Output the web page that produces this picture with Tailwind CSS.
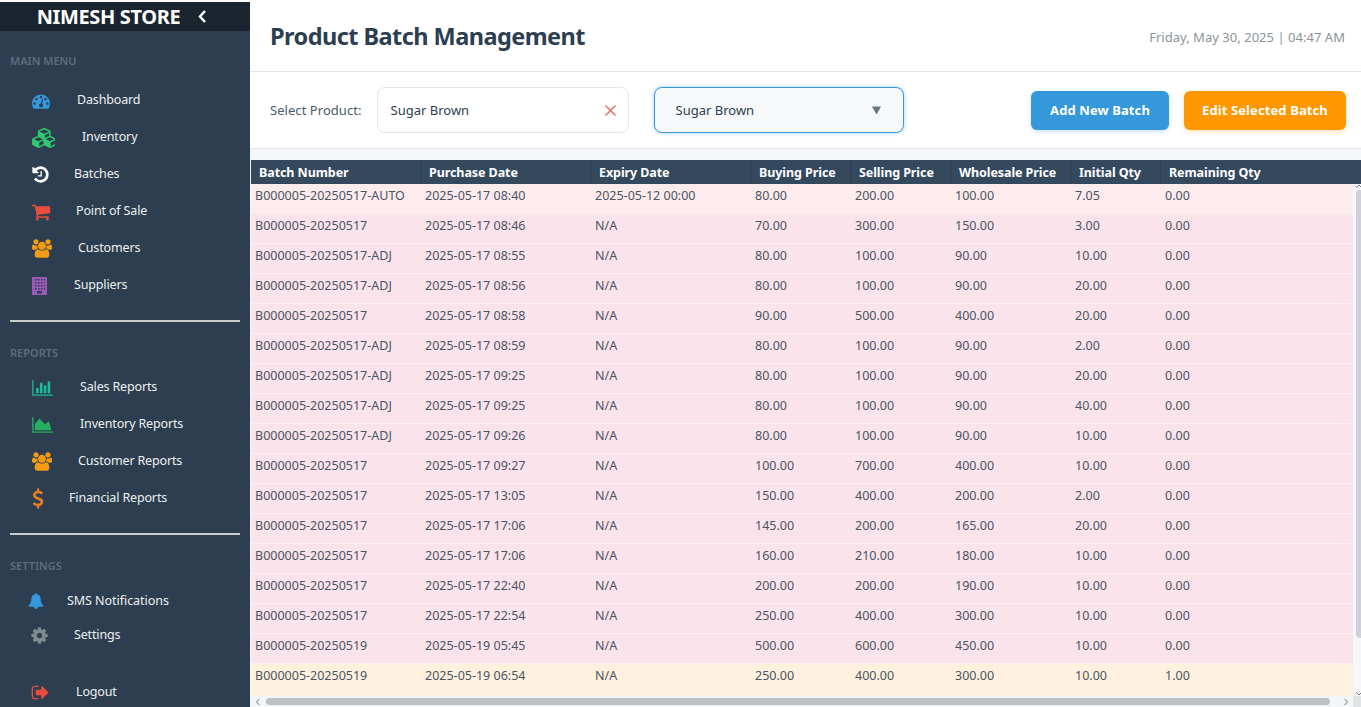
<!DOCTYPE html>
<html lang="en">

<head>
    <meta charset="UTF-8">
    <title>Product Batch Management</title>
    <script src="https://cdn.jsdelivr.net/npm/@tailwindcss/browser@4"></script>
</head>

<body class="h-screen overflow-hidden bg-white font-['Noto_Sans',sans-serif] text-[#2c3e50]">
    <div class="flex h-[707px]">
        <!-- Sidebar -->
        <aside class="w-[250px] shrink-0 bg-[#2c3e50] text-[12.5px] tracking-[-0.15px] text-[#ecf0f1] flex flex-col pt-[2px] bg-clip-content overflow-hidden">
            <div class="h-[29px] shrink-0 bg-[#1a252f] flex items-center justify-center pr-[6px] gap-[17px]">
                <span class="text-white text-[20px] leading-none font-bold tracking-[-0.35px]">NIMESH STORE</span>
                <svg class="w-[10px] h-[13px]" viewBox="0 0 10 13"><path d="M8 1 3 6.500 8 12" fill="none" stroke="#fff" stroke-width="2.500"/></svg>
            </div>

            <div class="mt-[23px] shrink-0 pl-[10px] h-[14px] leading-[14px] text-[11px] tracking-normal font-semibold text-[#5d6d7e]">MAIN MENU</div>
            <nav class="mt-[14px] shrink-0 flex flex-col">
                <a class="h-[37px] flex items-center pl-[32px]"><svg class="w-[18px] h-[18px] fill-[#3498db]" viewBox="0 0 1792 1792"><path d="M384 1152q0-53-37.500-90.500t-90.500-37.500-90.500 37.500-37.500 90.500 37.500 90.500 90.500 37.500 90.500-37.500 37.500-90.500zm192-448q0-53-37.500-90.500t-90.500-37.500-90.500 37.500-37.500 90.500 37.500 90.500 90.500 37.500 90.500-37.500 37.500-90.500zm428 481l101-382q6-26-7.500-48.500t-38.500-29.500-48 6.500-30 39.500l-101 382q-60 5-107 43.500t-63 98.500q-20 77 20 146t117 89 146-20 89-117q16-60-6-117t-72-91zm660-33q0-53-37.500-90.500t-90.500-37.500-90.500 37.500-37.500 90.500 37.500 90.500 90.500 37.500 90.500-37.500 37.500-90.500zm-640-640q0-53-37.500-90.500t-90.500-37.500-90.500 37.500-37.500 90.500 37.500 90.500 90.500 37.500 90.500-37.500 37.500-90.500zm448 192q0-53-37.500-90.500t-90.500-37.500-90.500 37.500-37.500 90.500 37.500 90.500 90.500 37.500 90.500-37.500 37.500-90.500zm320 448q0 261-141 483-19 29-54 29h-1402q-35 0-54-29-141-221-141-483 0-182 71-348t191-286 286-191 348-71 348 71 286 191 191 286 71 348z"/></svg><span class="ml-[27px]">Dashboard</span></a>
                <a class="h-[37px] flex items-center pl-[32px]"><svg class="w-[23px] h-[20px] fill-[#2ecc71]" viewBox="0 0 2048 1792"><path d="M640 1632l384-192v-314l-384 164v342zm-64-454l404-173-404-173-404 173zm1088 454l384-192v-314l-384 164v342zm-64-454l404-173-404-173-404 173zm-448-293l384-165v-266l-384 164v267zm-64-379l441-189-441-189-441 189zm1088 518v416q0 36-19 67t-52 47l-448 224q-25 14-57 14t-57-14l-448-224q-4-2-7-4-2 2-7 4l-448 224q-25 14-57 14t-57-14l-448-224q-33-16-52-47t-19-67v-416q0-38 21.500-70t56.500-48l434-186v-400q0-38 21.500-70t56.500-48l448-192q23-10 50-10t50 10l448 192q35 16 56.500 48t21.500 70v400l434 186q36 16 57 48t21 70z"/></svg><span class="ml-[27px]">Inventory</span></a>
                <a class="h-[37px] flex items-center pl-[31px]"><svg class="w-[19px] h-[19px] fill-white" viewBox="0 0 1792 1792"><path d="M1664 896q0 156-61 298t-164 245-245 164-298 61q-172 0-327-72.500t-264-204.500q-7-10-6.500-22.500t8.500-20.500l137-138q10-9 25-9 16 2 23 12 73 95 179 147t225 52q104 0 198.500-40.500t163.500-109.500 109.500-163.500 40.500-198.500-40.500-198.500-109.500-163.500-163.500-109.500-198.500-40.500q-98 0-188 35.500t-160 101.500l137 138q31 30 14 69-17 40-59 40h-448q-26 0-45-19t-19-45v-448q0-42 40-59 39-17 69 14l130 129q107-101 244.500-156.500t284.500-55.500q156 0 298 61t245 164 164 245 61 298zm-640-288v448q0 14-9 23t-23 9h-320q-14 0-23-9t-9-23v-64q0-14 9-23t23-9h224v-352q0-14 9-23t23-9h64q14 0 23 9t9 23z"/></svg><span class="ml-[24px]">Batches</span></a>
                <a class="h-[37px] flex items-center pl-[31px]"><svg class="w-[20px] h-[20px] fill-[#e74c3c]" viewBox="0 0 1792 1792"><path d="M704 1536q0 52-38 90t-90 38-90-38-38-90 38-90 90-38 90 38 38 90zm896 0q0 52-38 90t-90 38-90-38-38-90 38-90 90-38 90 38 38 90zm128-1088v512q0 24-16.500 42.500t-40.500 21.500l-1044 122q13 60 13 70 0 16-24 64h920q26 0 45 19t19 45-19 45-45 19h-1024q-26 0-45-19t-19-45q0-11 8-31.500t16-36 21.500-40 15.500-29.500l-177-823h-204q-26 0-45-19t-19-45 19-45 45-19h256q16 0 28.500 6.500t19.500 15.500 13 24.500 8 26 5.500 29.500 4.500 26h1201q26 0 45 19t19 45z"/></svg><span class="ml-[25px]">Point of Sale</span></a>
                <a class="h-[37px] flex items-center pl-[32px]"><svg class="w-[20px] h-[19px] fill-[#f39c12]" viewBox="0 0 1920 1792"><path d="M593 896q-162 5-265 128h-134q-82 0-138-40.500t-56-118.500q0-353 124-353 6 0 43.500 21t97.500 42.500 119 21.500q67 0 133-23-5 37-5 66 0 139 81 256zm1071 637q0 120-73 189.500t-194 69.500h-874q-121 0-194-69.500t-73-189.500q0-53 3.500-103.500t14-109 26.500-108.500 43-97.500 62-81 85.500-53.500 111.500-20q10 0 43 21.500t73 48 107 48 135 21.500 135-21.500 107-48 73-48 43-21.500q61 0 111.500 20t85.500 53.500 62 81 43 97.500 26.500 108.500 14 109 3.500 103.500zm-1024-1277q0 106-75 181t-181 75-181-75-75-181 75-181 181-75 181 75 75 181zm704 384q0 159-112.500 271.500t-271.500 112.500-271.500-112.500-112.500-271.500 112.500-271.500 271.500-112.500 271.500 112.500 112.500 271.500zm576 225q0 78-56 118.500t-138 40.500h-134q-103-123-265-128 81-117 81-256 0-29-5-66 66 23 133 23 59 0 119-21.500t97.500-42.500 43.500-21q124 0 124 353zm-128-609q0 106-75 181t-181 75-181-75-75-181 75-181 181-75 181 75 75 181z"/></svg><span class="ml-[26px]">Customers</span></a>
                <a class="h-[37px] flex items-center pl-[32px]"><svg class="w-[15px] h-[18px] fill-[#9b59b6]" viewBox="0 0 15 18"><path fill-rule="evenodd" d="M0 0h15v18H0zM3 2v1.500h1.500V2zm3 0v1.500h1.500V2zm3 0v1.500h1.500V2zm3 0v1.500h1V2zM3 5v1.500h1.500V5zm3 0v1.500h1.500V5zm3 0v1.500h1.500V5zm3 0v1.500h1V5zM3 8v1.500h1.500V8zm3 0v1.500h1.500V8zm3 0v1.500h1.500V8zm3 0v1.500h1V8zM3 11v1.500h1.500V11zm3 0v1.500h1.500V11zm3 0v1.500h1.500V11zm3 0v1.500h1V11zM5 14v2.500h5V14z"/></svg><span class="ml-[27px]">Suppliers</span></a>
            </nav>
            <div class="mt-[16px] shrink-0 mx-[10px] h-[2px] bg-[#c8cccf]"></div>

            <div class="mt-[24px] shrink-0 pl-[10px] h-[14px] leading-[14px] text-[11px] tracking-normal font-semibold text-[#5d6d7e]">REPORTS</div>
            <nav class="mt-[9px] shrink-0 flex flex-col">
                <a class="h-[37px] flex items-center pl-[32px]"><svg class="w-[21px] h-[18px] fill-[#1abc9c]" viewBox="0 0 2048 1792"><path d="M640 896v512h-256v-512h256zm384-512v1024h-256v-1024h256zm1024 1152v128h-2048v-1536h128v1408h1920zm-640-896v768h-256v-768h256zm384-384v1152h-256v-1152h256z"/></svg><span class="ml-[27px]">Sales Reports</span></a>
                <a class="h-[37px] flex items-center pl-[32px]"><svg class="w-[21px] h-[18px] fill-[#27ae60]" viewBox="0 0 2048 1792"><path d="M2048 1536v128h-2048v-1536h128v1408h1920zm-384-1024l256 896h-1664v-576l448-576 576 576z"/></svg><span class="ml-[27px]">Inventory Reports</span></a>
                <a class="h-[37px] flex items-center pl-[32px]"><svg class="w-[20px] h-[19px] fill-[#f39c12]" viewBox="0 0 1920 1792"><path d="M593 896q-162 5-265 128h-134q-82 0-138-40.500t-56-118.500q0-353 124-353 6 0 43.500 21t97.500 42.500 119 21.500q67 0 133-23-5 37-5 66 0 139 81 256zm1071 637q0 120-73 189.500t-194 69.500h-874q-121 0-194-69.500t-73-189.500q0-53 3.500-103.500t14-109 26.500-108.500 43-97.500 62-81 85.500-53.500 111.500-20q10 0 43 21.500t73 48 107 48 135 21.500 135-21.500 107-48 73-48 43-21.500q61 0 111.500 20t85.500 53.500 62 81 43 97.500 26.500 108.500 14 109 3.500 103.500zm-1024-1277q0 106-75 181t-181 75-181-75-75-181 75-181 181-75 181 75 75 181zm704 384q0 159-112.500 271.500t-271.500 112.500-271.500-112.500-112.500-271.500 112.500-271.500 271.500-112.500 271.500 112.500 112.500 271.500zm576 225q0 78-56 118.500t-138 40.500h-134q-103-123-265-128 81-117 81-256 0-29-5-66 66 23 133 23 59 0 119-21.500t97.500-42.500 43.500-21q124 0 124 353zm-128-609q0 106-75 181t-181 75-181-75-75-181 75-181 181-75 181 75 75 181z"/></svg><span class="ml-[26px]">Customer Reports</span></a>
                <a class="h-[37px] flex items-center pl-[28px]"><svg class="w-[20px] h-[21px] fill-[#e67e22]" viewBox="0 0 1792 1792"><path d="M1362 1185q0 153-99.500 263.500t-258.500 136.500v175q0 14-9 23t-23 9h-135q-13 0-22.500-9.500t-9.500-22.500v-175q-66-9-127.500-31t-101.500-44.500-74-48-46.500-37.500-17.500-18q-17-21-2-41l103-135q7-10 23-12 15-2 24 9l2 2q113 99 243 125 37 8 74 8 81 0 142.500-43t61.500-122q0-28-15-53t-33.500-42-58.500-37.500-66-32-80-32.500q-39-16-61.500-25t-61.500-26.500-62.500-31-56.500-35.500-53.500-42.500-43.500-49-35.500-58-21-66.500-8.500-78q0-138 98-242t255-134v-180q0-13 9.500-22.500t22.500-9.500h135q14 0 23 9t9 23v176q57 6 110.500 23t87 33.500 63.500 37.500 39 29 15 14q17 18 5 38l-81 146q-8 15-23 16-14 3-27-7-3-3-14.500-12t-39-26.500-58.500-32-74.500-26-85.500-11.500q-95 0-155 43t-60 111q0 26 8.500 48t29.500 41.500 39.500 33 56 31 60.500 27 70 27.500q53 20 81 31.500t76 35 75.500 42.500 62 50 53 63.500 31.500 76.500 13 94z"/></svg><span class="ml-[21px]">Financial Reports</span></a>
            </nav>
            <div class="mt-[16px] shrink-0 mx-[10px] h-[2px] bg-[#c8cccf]"></div>

            <div class="mt-[24px] shrink-0 pl-[10px] h-[14px] leading-[14px] text-[11px] tracking-normal font-semibold text-[#5d6d7e]">SETTINGS</div>
            <nav class="mt-[11px] shrink-0 flex flex-col">
                <a class="h-[34px] flex items-center pl-[28px]"><svg class="w-[16px] h-[16px] fill-[#3498db]" viewBox="0 0 1792 1792"><path d="M912 1696q0-16-16-16-59 0-101.500-42.500t-42.500-101.500q0-16-16-16t-16 16q0 73 51.500 124.500t124.500 51.500q16 0 16-16zm816-288q0 52-38 90t-90 38h-448q0 106-75 181t-181 75-181-75-75-181h-448q-52 0-90-38t-38-90q50-42 91-88t85-119.500 74.500-158.500 50-206 19.500-260q0-152 117-282.500t307-158.500q-8-19-8-39 0-40 28-68t68-28 68 28 28 68q0 20-8 39 190 28 307 158.500t117 282.500q0 139 19.500 260t50 206 74.500 158.500 85 119.500 91 88z"/></svg><span class="ml-[23px] tracking-[-0.05px]">SMS Notifications</span></a>
                <a class="h-[34px] flex items-center pl-[30px]"><svg class="w-[19px] h-[19px] fill-[#7f8c8d]" viewBox="0 0 1792 1792"><path d="M1152 896q0-106-75-181t-181-75-181 75-75 181 75 181 181 75 181-75 75-181zm512-109v222q0 12-8 23t-20 13l-185 28q-19 54-39 91 35 50 107 138 10 12 10 25t-9 23q-27 37-99 108t-94 71q-12 0-26-9l-138-108q-44 23-91 38-16 136-29 186-7 28-36 28h-222q-14 0-24.500-8.500t-11.500-21.500l-28-184q-49-16-90-37l-141 107q-10 9-25 9-14 0-25-11-126-114-165-168-7-10-7-23 0-12 8-23 15-21 51-66.500t54-70.500q-27-50-41-99l-183-27q-13-2-21-12.500t-8-23.500v-222q0-12 8-23t19-13l186-28q14-46 39-92-40-57-107-138-10-12-10-24 0-10 9-23 26-36 98.500-107.500t94.500-71.500q13 0 26 10l138 107q44-23 91-38 16-136 29-186 7-28 36-28h222q14 0 24.500 8.500t11.500 21.500l28 184q49 16 90 37l142-107q9-9 24-9 13 0 25 10 129 119 165 170 7 8 7 22 0 12-8 23-15 21-51 66.500t-54 70.500q26 50 41 98l183 28q13 2 21 12.500t8 23.500z"/></svg><span class="ml-[25px]">Settings</span></a>
            </nav>
            <a class="mt-[23px] shrink-0 h-[34px] flex items-center pl-[31px]"><svg class="w-[19px] h-[19px] fill-[#e74c3c]" viewBox="0 0 1792 1792"><path d="M704 1440q0 4 1 20t.5 26.500-3 23.500-10 19.500-20.500 6.500h-320q-119 0-203.500-84.500t-84.500-203.500v-704q0-119 84.500-203.500t203.500-84.500h320q13 0 22.500 9.500t9.500 22.500q0 4 1 20t.5 26.500-3 23.500-10 19.500-20.500 6.500h-320q-66 0-113 47t-47 113v704q0 66 47 113t113 47h312l11.500 1 11.500 3 8 5.500 7 9 2 13.500zm928-544q0 26-19 45l-544 544q-19 19-45 19t-45-19-19-45v-288h-448q-26 0-45-19t-19-45v-384q0-26 19-45t45-19h448v-288q0-26 19-45t45-19 45 19l544 544q19 19 19 45z"/></svg><span class="ml-[26px]">Logout</span></a>
        </aside>

        <!-- Main Content -->
        <main class="flex-1 min-w-0 flex flex-col bg-[#f4f6f9]">
            <header class="h-[72px] shrink-0 bg-white border-b border-[#e3e5e8] flex items-center justify-between pl-[20px] pr-[16px]">
                <h1 class="pt-[3px] text-[23.5px] font-bold tracking-[-0.55px] text-[#2c3e50]">Product Batch Management</h1>
                <span class="pt-[4px] text-[13px] tracking-[0.03px] text-[#8a9499]">Friday, May 30, 2025 | 04:47 AM</span>
            </header>

            <div class="h-[77px] shrink-0 bg-white border-b border-[#e3e5e8] flex items-center pl-[20px] pr-[15px] text-[13px]">
                <label class="pt-[2px] text-[#4a5a6a] mr-[15px] tracking-[0.05px]">Select Product:</label>
                <div class="w-[252px] h-[46px] rounded-[8px] border border-[#e3e5e8] bg-white flex items-center justify-between pl-[13px] pr-[11px]">
                    <span class="pt-[2px]">Sugar Brown</span>
                    <svg class="w-[13px] h-[13px] opacity-80" viewBox="0 0 13 13"><path d="M1.500 1.500l10 10m0-10-10 10" stroke="#e74c3c" stroke-width="1.500" fill="none"/></svg>
                </div>
                <div class="ml-[25px] w-[250px] h-[46px] rounded-[8px] border border-[#3498db] shadow-[0_0_4px_rgba(52,152,219,0.45)] bg-[#f7f8fa] flex items-center justify-between pl-[21px] pr-[22px]">
                    <span class="pt-[2px]">Sugar Brown</span>
                    <svg class="w-[9px] h-[9px] fill-[#6b7680]" viewBox="0 0 10 9"><path d="M0 0h10L5 9z"/></svg>
                </div>
                <button class="ml-auto w-[138px] h-[39px] pt-[2px] rounded-[6px] bg-[#3498db] shadow-[0_2px_4px_rgba(52,152,219,0.25)] text-white font-bold text-[13px] tracking-[0.1px]">Add New Batch</button>
                <button class="ml-[15px] w-[162px] h-[39px] pt-[2px] rounded-[6px] bg-[#ff9800] shadow-[0_2px_4px_rgba(255,152,0,0.25)] text-white font-bold text-[13px] tracking-[0.1px]">Edit Selected Batch</button>
            </div>

            <!-- Table -->
            <section class="mt-[11px] flex-1 min-h-0 ml-[1px] overflow-hidden">
                <table class="w-full table-fixed border-separate border-spacing-0 text-[12.5px] text-[#4a5563]">
                    <thead>
                        <tr class="h-[24px] bg-[#34495e] text-white text-left">
                            <th class="w-[170px] pl-[8px] pt-[2px] text-[12.5px] tracking-[-0.08px] font-bold border-r border-[#2c3e50]">Batch Number</th>
                            <th class="w-[170px] pl-[8px] pt-[2px] text-[12.5px] tracking-[-0.08px] font-bold border-r border-[#2c3e50]">Purchase Date</th>
                            <th class="w-[160px] pl-[8px] pt-[2px] text-[12.5px] tracking-[-0.08px] font-bold border-r border-[#2c3e50]">Expiry Date</th>
                            <th class="w-[100px] pl-[8px] pt-[2px] text-[12.5px] tracking-[-0.08px] font-bold border-r border-[#2c3e50]">Buying Price</th>
                            <th class="w-[100px] pl-[8px] pt-[2px] text-[12.5px] tracking-[-0.08px] font-bold border-r border-[#2c3e50]">Selling Price</th>
                            <th class="w-[120px] pl-[8px] pt-[2px] text-[12.5px] tracking-[-0.08px] font-bold border-r border-[#2c3e50]">Wholesale Price</th>
                            <th class="w-[90px] pl-[8px] pt-[2px] text-[12.5px] tracking-[-0.08px] font-bold border-r border-[#2c3e50]">Initial Qty</th>
                            <th class="pl-[8px] pt-[2px] text-[12.5px] tracking-[-0.08px] font-bold">Remaining Qty</th>
                        </tr>
                    </thead>
                    <tbody id="batch-rows"></tbody>
                </table>
            </section>
        </main>
    </div>

    <!-- Scrollbars -->
    <div class="fixed left-[1353px] top-[184px] w-[8px] h-[512px] bg-[#f6f7f9] overflow-hidden">
        <svg class="absolute left-[3px] top-[0px] w-[8px] h-[5px]" viewBox="0 0 8 5"><path d="M0 4l3-3 3 3" fill="none" stroke="#777"/></svg>
        <div class="ml-[3px] mt-[6px] h-[448px] w-[8px] rounded-[4px] bg-[#ced2d8]"></div>
        <svg class="absolute left-[3px] bottom-[0px] w-[8px] h-[5px]" viewBox="0 0 8 5"><path d="M0 1l3 3 3-3" fill="none" stroke="#777"/></svg>
    </div>
    <div class="fixed left-[251px] top-[696px] w-[1110px] h-[11px] bg-[#f4f5f6] flex items-center">
        <svg class="w-[8px] h-[8px] ml-[3px]" viewBox="0 0 8 8"><path d="M5.500 1 2.500 4l3 3" fill="none" stroke="#777"/></svg>
        <div class="ml-[4px] w-[1064px] h-[7px] rounded-full bg-[#bcc1c5]"></div>
        <svg class="w-[8px] h-[8px] ml-[12px]" viewBox="0 0 8 8"><path d="M2.500 1l3 3-3 3" fill="none" stroke="#777"/></svg>
        <div class="ml-auto h-[11px] w-[8px] bg-[#e2e3e5]"></div>
    </div>

    <script>
        const batches = [
            ['B000005-20250517-AUTO', '08:40', '2025-05-12 00:00', '80.00', '200.00', '100.00', '7.05', '0.00'],
            ['B000005-20250517', '08:46', 'N/A', '70.00', '300.00', '150.00', '3.00', '0.00'],
            ['B000005-20250517-ADJ', '08:55', 'N/A', '80.00', '100.00', '90.00', '10.00', '0.00'],
            ['B000005-20250517-ADJ', '08:56', 'N/A', '80.00', '100.00', '90.00', '20.00', '0.00'],
            ['B000005-20250517', '08:58', 'N/A', '90.00', '500.00', '400.00', '20.00', '0.00'],
            ['B000005-20250517-ADJ', '08:59', 'N/A', '80.00', '100.00', '90.00', '2.00', '0.00'],
            ['B000005-20250517-ADJ', '09:25', 'N/A', '80.00', '100.00', '90.00', '20.00', '0.00'],
            ['B000005-20250517-ADJ', '09:25', 'N/A', '80.00', '100.00', '90.00', '40.00', '0.00'],
            ['B000005-20250517-ADJ', '09:26', 'N/A', '80.00', '100.00', '90.00', '10.00', '0.00'],
            ['B000005-20250517', '09:27', 'N/A', '100.00', '700.00', '400.00', '10.00', '0.00'],
            ['B000005-20250517', '13:05', 'N/A', '150.00', '400.00', '200.00', '2.00', '0.00'],
            ['B000005-20250517', '17:06', 'N/A', '145.00', '200.00', '165.00', '20.00', '0.00'],
            ['B000005-20250517', '17:06', 'N/A', '160.00', '210.00', '180.00', '10.00', '0.00'],
            ['B000005-20250517', '22:40', 'N/A', '200.00', '200.00', '190.00', '10.00', '0.00'],
            ['B000005-20250517', '22:54', 'N/A', '250.00', '400.00', '300.00', '10.00', '0.00'],
            ['B000005-20250519', '05:45', 'N/A', '500.00', '600.00', '450.00', '10.00', '0.00'],
            ['B000005-20250519', '06:54', 'N/A', '250.00', '400.00', '300.00', '10.00', '1.00']
        ];

        function purchaseDate(row) {
            return (row[0].endsWith('0519') ? '2025-05-19 ' : '2025-05-17 ') + row[1];
        }

        // First row is the expired one, last row runs down to the scrollbar
        function rowClass(i) {
            if (i === 0) return 'h-[30px] bg-[#feebed]';
            if (i === batches.length - 1) return 'h-[33px] bg-[#fff1de]';
            return 'h-[30px] bg-[#fbe3eb]';
        }

        function cellClass(i) {
            if (i === 0) return 'pl-[4px] pb-[6px]';
            if (i === batches.length - 1) return 'pl-[4px] pb-[9px]';
            return 'pl-[4px] pb-[4px] border-b border-[#fdeef3]';
        }

        document.getElementById('batch-rows').innerHTML = batches.map((row, i) => {
            const cells = [row[0], purchaseDate(row), row[2], row[3], row[4], row[5], row[6], row[7]];
            return `<tr class="${rowClass(i)}">` +
                cells.map(c => `<td class="${cellClass(i)}">${c}</td>`).join('') + '</tr>';
        }).join('');
    </script>
</body>

</html>
